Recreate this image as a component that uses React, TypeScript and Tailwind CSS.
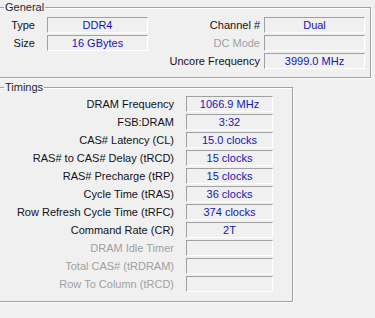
import React from "react";

const font = { fontFamily: '"Liberation Sans", Arial, sans-serif' };

function Group({ title, className, children }: { title: string; className: string; children: React.ReactNode }) {
  return (
    <fieldset className={"border border-[#a0a0a0] shadow-[1px_1px_0_#ffffff,inset_1px_1px_0_#ffffff] " + className}>
      <legend className="ml-[5px] px-px leading-[14px] text-[#1e1e2e]">{title}</legend>
      {children}
    </fieldset>
  );
}

function Field({ value, w }: { value?: string; w: string }) {
  return (
    <div
      className={
        "h-4 border border-t-[#a0a0a0] border-l-[#a0a0a0] border-b-white border-r-white text-center leading-[14px] text-[#1414b4] whitespace-nowrap " +
        w
      }
    >
      {value}
    </div>
  );
}

function Label({ text, off }: { text: string; off?: boolean }) {
  return (
    <span className={"text-right leading-4 whitespace-nowrap " + (off ? "text-[#a0a0a0]" : "text-[#101018]")}>{text}</span>
  );
}

const TIMINGS: { label: string; value?: string; off?: boolean }[] = [
  { label: "DRAM Frequency", value: "1066.9 MHz" },
  { label: "FSB:DRAM", value: "3:32" },
  { label: "CAS# Latency (CL)", value: "15.0 clocks" },
  { label: "RAS# to CAS# Delay (tRCD)", value: "15 clocks" },
  { label: "RAS# Precharge (tRP)", value: "15 clocks" },
  { label: "Cycle Time (tRAS)", value: "36 clocks" },
  { label: "Row Refresh Cycle Time (tRFC)", value: "374 clocks" },
  { label: "Command Rate (CR)", value: "2T" },
  { label: "DRAM Idle Timer", off: true },
  { label: "Total CAS# (tRDRAM)", off: true },
  { label: "Row To Column (tRCD)", off: true },
];

export default function App() {
  return (
    <div className="w-[375px] h-[318px] overflow-hidden bg-[#f0f0f0] text-[11px]" style={font}>
      <Group title="General" className="ml-[-2px] w-[373px]">
        <div className="flex pt-[3px] pb-2">
          <div className="grid grid-cols-[36px_101px] gap-x-3 gap-y-0.5 content-start">
            <Label text="Type" />
            <Field value="DDR4" w="w-[101px]" />
            <Label text="Size" />
            <Field value="16 GBytes" w="w-[101px]" />
          </div>
          <div className="ml-auto mr-[5px] grid grid-cols-[auto_101px] gap-x-1 gap-y-0.5">
            <Label text="Channel #" />
            <Field value="Dual" w="w-[101px]" />
            <Label text="DC Mode" off />
            <Field w="w-[101px]" />
            <Label text="Uncore Frequency" />
            <Field value="3999.0 MHz" w="w-[101px]" />
          </div>
        </div>
      </Group>

      <Group title="Timings" className="ml-[-2px] mt-[2px] w-[295px]">
        <div className="mr-[19px] grid grid-cols-[1fr_87px] gap-x-3 gap-y-0.5 pt-[2px] pb-[9px]">
          {TIMINGS.map((t) => (
            <React.Fragment key={t.label}>
              <Label text={t.label} off={t.off} />
              <Field value={t.value} w="w-[87px]" />
            </React.Fragment>
          ))}
        </div>
      </Group>
    </div>
  );
}
